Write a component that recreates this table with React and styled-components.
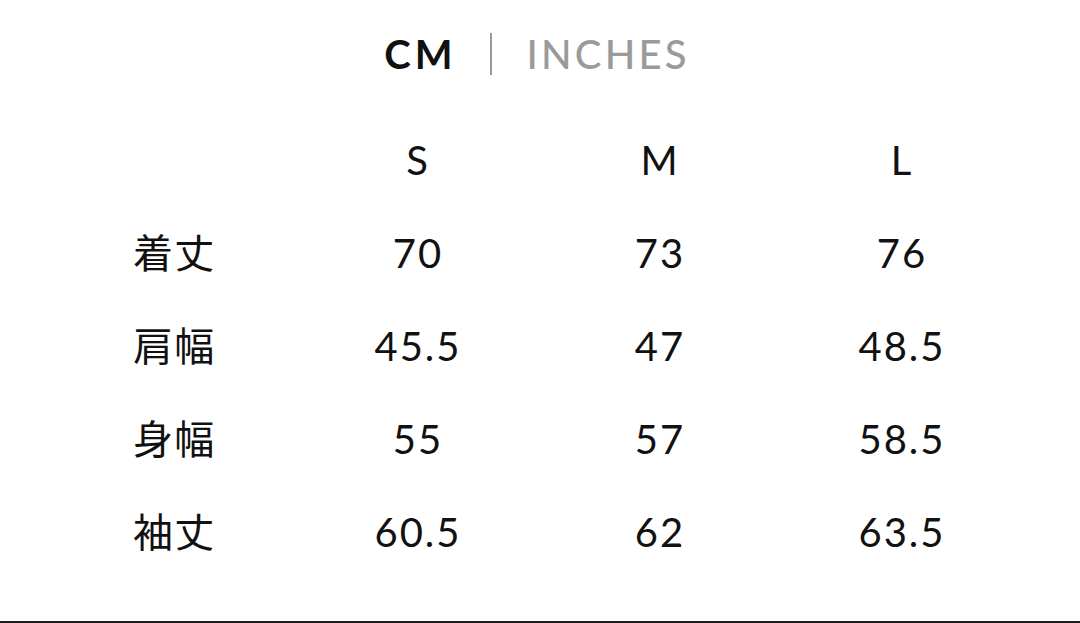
import React from "react";
import styled, { createGlobalStyle } from "styled-components";

const Global = createGlobalStyle`
  html, body { margin: 0; padding: 0; background: #fff; }
  body { font-family: Lato, "Noto Sans CJK JP", sans-serif; color: #111; }
`;

const Page = styled.div`
  box-sizing: border-box;
  width: 1080px;
  height: 623px;
  border-bottom: 2px solid #1c1c1c;
  display: flex;
  flex-direction: column;
  overflow: hidden;
`;

const UnitBar = styled.div`
  height: 108px;
  display: flex;
  align-items: center;
  justify-content: center;
  padding-right: 6px;
  gap: 34px;
`;

const Unit = styled.span`
  font-family: Lato, sans-serif;
  font-size: 40px;
  font-weight: ${(p) => (p.$active ? 700 : 500)};
  letter-spacing: ${(p) => (p.$active ? "0.1em" : "0.08em")};
  color: ${(p) => (p.$active ? "#111" : "#9a9a9a")};
  line-height: 1;
`;

const Divider = styled.span`
  width: 2px;
  height: 42px;
  background: #9a9a9a;
`;

const Table = styled.div`
  display: grid;
  grid-template-columns: 164px 242px 242px 242px;
  grid-auto-rows: 93px;
  padding-left: 133px;
  margin-top: 5px;
`;

const Cell = styled.div`
  display: flex;
  align-items: center;
  justify-content: center;
  font-family: Lato, "Noto Sans CJK JP", sans-serif;
  font-size: 40px;
  font-weight: 400;
  letter-spacing: 0.05em;
  color: #111;
`;

const Label = styled.div`
  display: flex;
  align-items: center;
  font-family: "Noto Sans CJK JP", sans-serif;
  font-size: 40px;
  font-weight: 400;
  letter-spacing: 0.03em;
  color: #111;
  padding-bottom: 4px;
`;

const sizes = ["S", "M", "L"];
const rows = [
  ["着丈", "70", "73", "76"],
  ["肩幅", "45.5", "47", "48.5"],
  ["身幅", "55", "57", "58.5"],
  ["袖丈", "60.5", "62", "63.5"],
];

export default function App() {
  return (
    <>
      <Global />
      <Page>
        <UnitBar>
          <Unit $active>CM</Unit>
          <Divider />
          <Unit>INCHES</Unit>
        </UnitBar>
        <Table>
          <Label />
          {sizes.map((s) => (
            <Cell key={s}>{s}</Cell>
          ))}
          {rows.map((r) => (
            <React.Fragment key={r[0]}>
              <Label>{r[0]}</Label>
              {r.slice(1).map((v, i) => (
                <Cell key={i}>{v}</Cell>
              ))}
            </React.Fragment>
          ))}
        </Table>
      </Page>
    </>
  );
}
